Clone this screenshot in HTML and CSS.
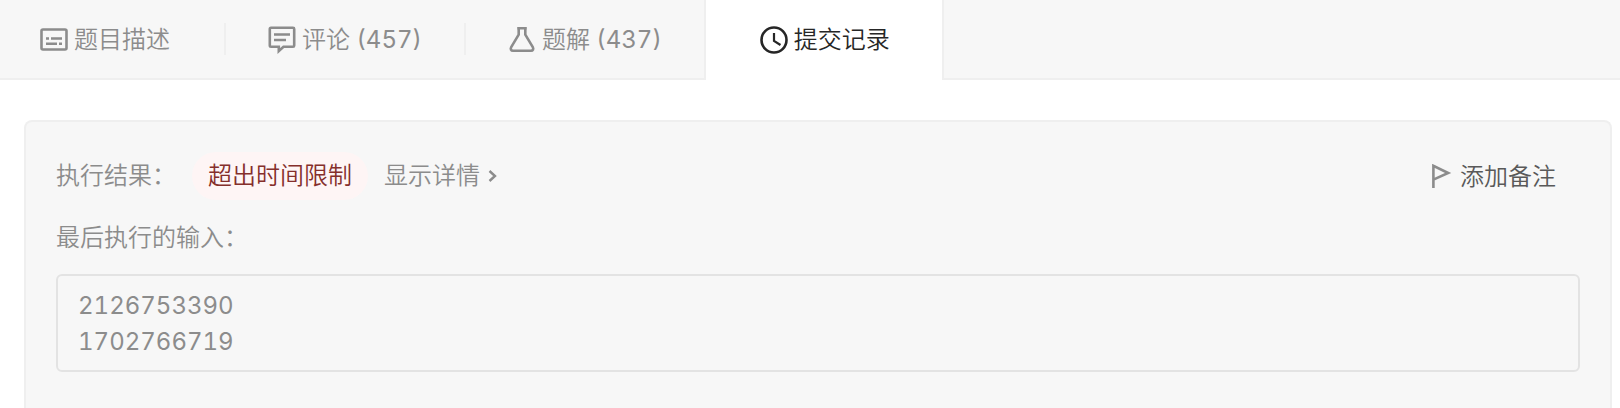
FILE: index.html
```
<!DOCTYPE html>
<html lang="zh-CN">
	<head>
		<meta charset="utf-8" />
		<link rel="stylesheet" href="styles.css">
		<title>提交记录</title>
	</head>
	<body>
		<div class="page">
			<nav class="tabs">
				<a class="tab first" href="#description">
					<svg width="28" height="28" viewBox="0 0 28 28"><rect x="1.5" y="3.5" width="25" height="20" rx="1.5" fill="none" stroke="currentColor" stroke-width="2.6"/><path d="M6 12.5h3M11 12.5h11M6 17.8h11M19 17.8h3" fill="none" stroke="currentColor" stroke-width="2.4"/></svg>
					<span>题目描述</span>
				</a>
				<a class="tab" href="#comments">
					<svg width="28" height="28" viewBox="0 0 28 28"><path d="M3 1.8h22a1.2 1.2 0 0 1 1.2 1.2v16.5a1.2 1.2 0 0 1-1.2 1.2H15.5L10.8 25v-4.3H3a1.2 1.2 0 0 1-1.2-1.2V3A1.2 1.2 0 0 1 3 1.8zM6 8.5h16M6 14h12" fill="none" stroke="currentColor" stroke-width="2.6"/></svg>
					<span>评论 <span class="count">(457)</span></span>
				</a>
				<a class="tab last" href="#solutions">
					<svg width="28" height="28" viewBox="0 0 28 28"><path d="M9.2 2.3h9.6M10.7 2.3v6.4L3.2 21.1c-1 1.8-.2 3.6 1.8 3.6h18c2 0 2.8-1.8 1.8-3.6L17.3 8.7V2.3" fill="none" stroke="currentColor" stroke-width="2.6" stroke-linejoin="round"/></svg>
					<span>题解 <span class="count">(437)</span></span>
				</a>
				<a class="tab active" href="#submissions">
					<svg width="28" height="28" viewBox="0 0 28 28"><circle cx="14" cy="14" r="12.5" fill="none" stroke="currentColor" stroke-width="2.6"/><path d="M14 7v8l6.5 4" fill="none" stroke="currentColor" stroke-width="2.2"/></svg>
					<span>提交记录</span>
				</a>
			</nav>
			<main class="panel">
				<div class="result">
					<span class="label">执行结果：</span>
					<span class="status">超出时间限制</span>
					<a class="detail" href="#detail">显示详情
						<svg width="10" height="14" viewBox="0 0 10 14"><path d="M1.5 2l5.5 5-5.5 5" fill="none" stroke="currentColor" stroke-width="2.4"/></svg>
					</a>
					<button class="note" type="button">
						<svg width="20" height="26" viewBox="0 0 20 26"><path d="M1.4 24V1.8L16.2 9 1.4 15.6" fill="none" stroke="currentColor" stroke-width="2.6"/></svg>
						<span>添加备注</span>
					</button>
				</div>
				<h2 class="label">最后执行的输入：</h2>
				<pre class="input">2126753390
1702766719</pre>
			</main>
		</div>
	</body>
</html>
```
FILE: styles.css
```
body,h2,pre{
	margin:0;
	padding:0;
}
body,button,pre,h2{
	font-family:Inter, "Noto Sans CJK SC", sans-serif;
	font-size:24px;
	font-weight:350;
	line-height:36px;
	font-variant-numeric:tabular-nums;
}
body{
	background-color:#fff;
	color:#8c8c8c;
}
a{
	color:inherit;
	text-decoration:none;
}
svg{
	flex:none;
}
.page{
	display:flex;
	flex-direction:column;
	min-height:100vh;
}
.tabs{
	display:flex;
	height:78px;
	background-color:#f7f7f7;
	border-bottom:2px solid #efefef;
}
.tab{
	display:flex;
	align-items:center;
	gap:6px;
	padding:2px 44px 0 42px;
	white-space:nowrap;
	background:linear-gradient(#efefef,#efefef) right center / 2px 32px no-repeat;
}
.tab.first{
	padding:2px 56px 0 40px;
}
.tab.last{
	padding-right:42px;
	background:none;
	border-right:2px solid #efefef;
}
.tab.active{
	padding:2px 52px 2px 54px;
	margin-bottom:-2px;
	background:#fff;
	color:#262626;
	border-right:2px solid #efefef;
}
.count,.input{
	font-weight:400;
}
.panel{
	flex:1;
	margin:40px 8px 0 24px;
	padding:30px 30px 0;
	background-color:#f7f7f7;
	border:2px solid #efefef;
	border-bottom:0;
	border-radius:8px 8px 0 0;
}
.result{
	display:flex;
	align-items:center;
	gap:16px;
	white-space:nowrap;
}
.status{
	padding:6px 16px;
	border-radius:24px;
	background-color:#fef5f5;
	color:#852f2b;
}
.detail{
	display:flex;
	align-items:center;
	gap:8px;
}
.note{
	display:flex;
	align-items:center;
	gap:8px;
	margin-left:auto;
	padding:2px 24px 0 0;
	border:0;
	background:none;
	color:#595959;
}
.note svg{
	color:#8c8c8c;
}
h2.label{
	margin:20px 0 18px;
}
.input{
	padding:12px 20px 10px;
	border:2px solid #e3e3e3;
	border-radius:6px;
}
```
